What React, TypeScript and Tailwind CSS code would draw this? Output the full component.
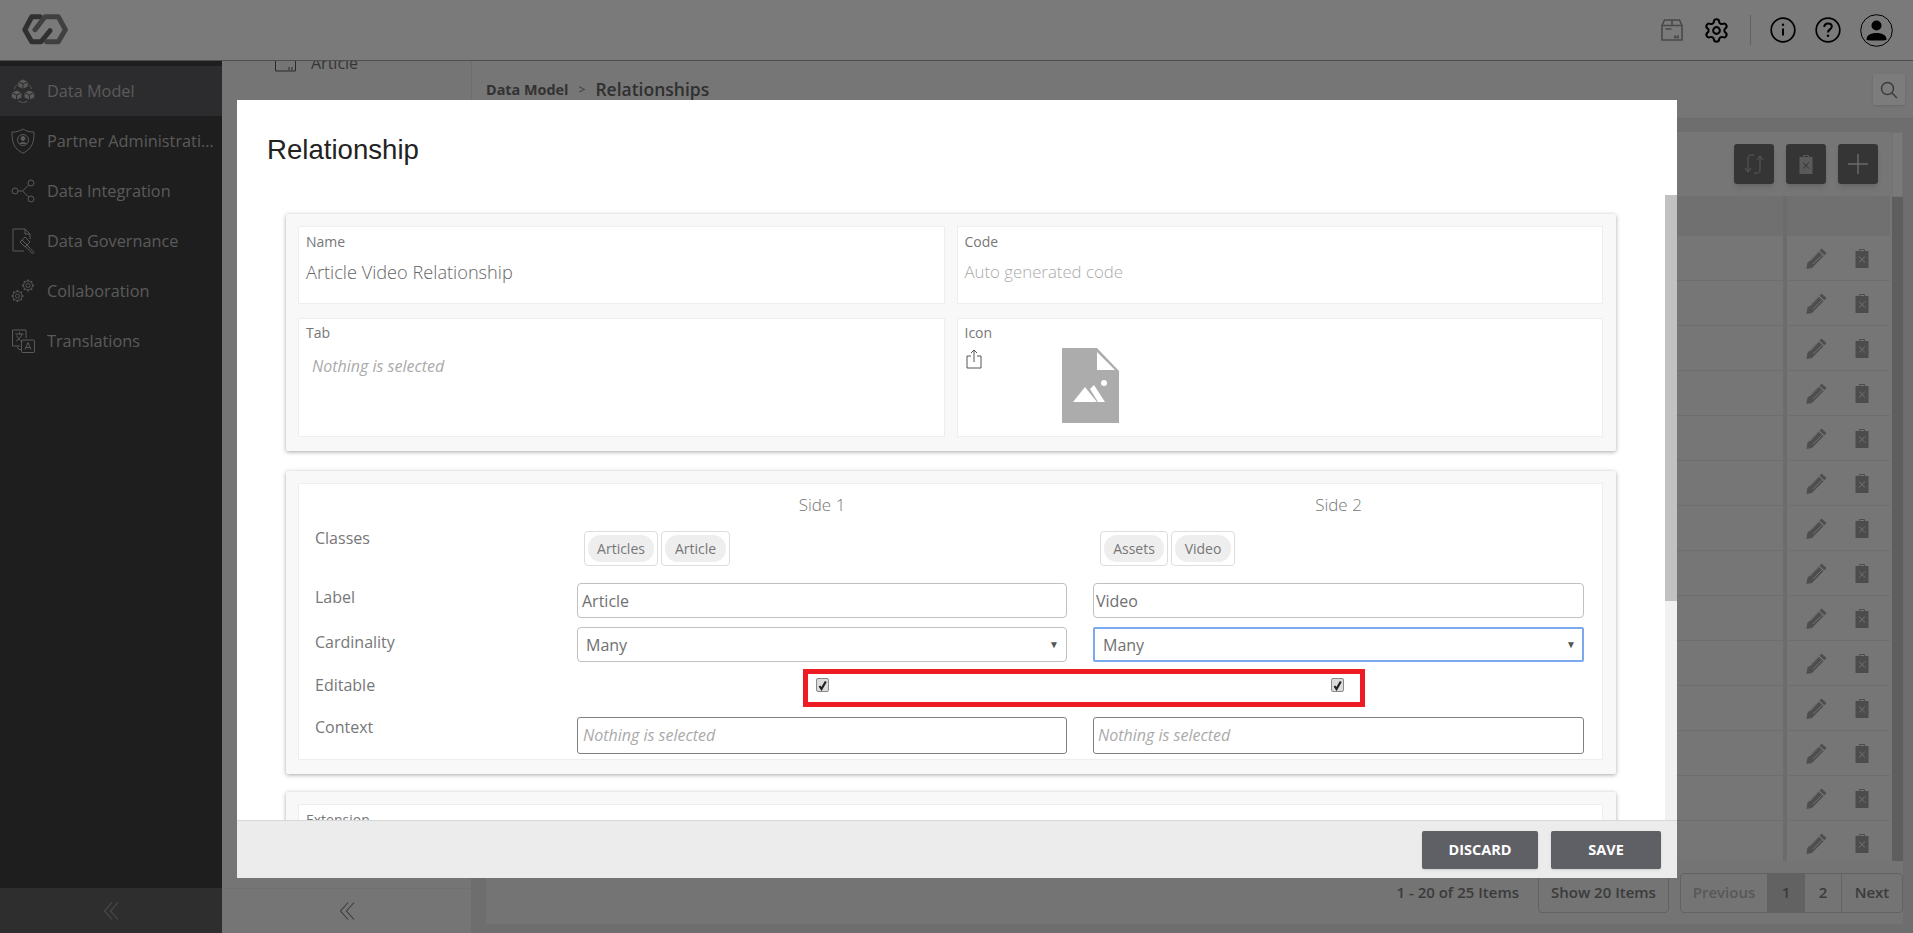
import { Settings } from "lucide-react";

const font = { fontFamily: '"Open Sans", "Noto Sans", sans-serif' };

function IconCubes() {
  return (
    <svg width="24" height="24" viewBox="0 0 24 24" fill="#b4b4b4" stroke="none">
      <path d="M12 0.500l4.800 2.200v4.800L12 9.800 7.200 7.500V2.700z" />
      <path d="M5.600 11.500l4.800 2.200v4.800l-4.800 2.300-4.800-2.300v-4.800z" />
      <path d="M18.400 11.500l4.800 2.200v4.800l-4.800 2.300-4.800-2.300v-4.800z" />
      <path d="M3.500 10C4 8 5 6.500 6.300 5.500M20.500 10c-.5-2-1.500-3.500-2.800-4.500M7.500 22l4.500 2 4.500-2" fill="none" stroke="#b4b4b4" strokeWidth="1" />
      <path d="M12 5v4.800M.8 13.700l4.800 2.300 4.800-2.300M13.600 13.700l4.800 2.300 4.800-2.300M5.600 16v5M18.400 16v5M7.200 2.700L12 5l4.800-2.300" fill="none" stroke="#3c3c3c" strokeWidth="0.800" />
    </svg>
  );
}
function IconShield() {
  return (
    <svg width="24" height="26" viewBox="0 0 24 26" fill="none" stroke="#b4b4b4" strokeWidth="1">
      <path d="M12 1c3 2 6.500 3 11 3.200 0 9-1 16-11 21C2 20.200 1 13.200 1 4.200 5.500 4 9 3 12 1z" />
      <circle cx="12" cy="12" r="5.500" />
      <circle cx="12" cy="10.500" r="2" fill="#b4b4b4" />
      <path d="M8.500 16c1-2 6-2 7 0" fill="#b4b4b4" />
    </svg>
  );
}
function IconNodes() {
  return (
    <svg width="24" height="24" viewBox="0 0 24 24" fill="none" stroke="#b4b4b4" strokeWidth="1">
      <circle cx="4" cy="12" r="3" />
      <circle cx="20" cy="4" r="3" />
      <circle cx="20" cy="20" r="3" />
      <path d="M7 12h4.500l6.300-6M11.500 12l6.300 6" />
    </svg>
  );
}
function IconGavel() {
  return (
    <svg width="24" height="26" viewBox="0 0 24 26" fill="none" stroke="#b4b4b4" strokeWidth="1">
      <path d="M13 23H2V1h12l5 5v5M14 1v5h5" />
      <path d="M9 14l5-5 5 5-5 5z" />
      <path d="M11 12l5 5M16 17l7 7.500-1.500 1.200-7-7" />
    </svg>
  );
}
function Gear({ x, y, r }: { x: number; y: number; r: number }) {
  const teeth = [0, 45, 90, 135, 180, 225, 270, 315];
  return (
    <g>
      <circle cx={x} cy={y} r={r} />
      <circle cx={x} cy={y} r={r * 0.45} />
      {teeth.map((a) => {
        const c = Math.cos((a * Math.PI) / 180);
        const s = Math.sin((a * Math.PI) / 180);
        return <line key={a} x1={x + c * r} y1={y + s * r} x2={x + c * (r + 1.500)} y2={y + s * (r + 1.500)} strokeWidth="1.500" />;
      })}
    </g>
  );
}
function IconGears() {
  return (
    <svg width="24" height="24" viewBox="0 0 24 24" fill="none" stroke="#b4b4b4" strokeWidth="0.900">
      <Gear x={17} y={6.500} r={4.500} />
      <Gear x={6.500} y={17} r={4.500} />
    </svg>
  );
}
function IconTranslate() {
  return (
    <svg width="24" height="24" viewBox="0 0 24 24" fill="none" stroke="#b4b4b4" strokeWidth="1">
      <path d="M9 17H1.500V1h13.500v8" />
      <rect x="10.500" y="11" width="13" height="12.500" rx="1" />
      <path d="M4.500 5h8M8.500 3v2M5 12c3-1.500 5-4 6-7M5.500 6.500c1.500 3 3.500 5 6 6" />
      <path d="M14 20.500l3-7 3 7M15 18.500h4" />
      <path d="M6 18l2 2.500h3" />
    </svg>
  );
}
function Logo() {
  return (
    <svg width="46" height="32" viewBox="0 0 46 32" fill="none" strokeWidth="5" strokeLinejoin="round" strokeLinecap="round">
      <path d="M18 2.800H9.700L2.800 15.700 9.700 27.800H19L28 16.700" stroke="#606060" />
      <path d="M13 15.700L23 2.800H36.300L43.400 15.700 36.300 27.800H24.700" stroke="#808080" />
    </svg>
  );
}
function IconBox() {
  return (
    <svg width="22" height="22" viewBox="0 0 22 22" fill="none" stroke="#909090" strokeWidth="1.600">
      <path d="M1 6.500L3.500 1h15L21 6.500V21H1z" />
      <path d="M1 6.500h20M11 1v5.500" />
      <path d="M4.500 10h6M14 16v2M17 16v2M13 18.500h5" strokeWidth="1.300" />
    </svg>
  );
}
function IconInfo() {
  return (
    <svg width="26" height="26" viewBox="0 0 26 26" fill="none" stroke="#000" strokeWidth="1.700">
      <circle cx="13" cy="13" r="11.800" />
      <path d="M13 11.500v7" strokeWidth="2" />
      <circle cx="13" cy="7.800" r="1.200" fill="#000" stroke="none" />
    </svg>
  );
}
function IconHelp() {
  return (
    <svg width="26" height="26" viewBox="0 0 26 26" fill="none" stroke="#000" strokeWidth="1.700">
      <circle cx="13" cy="13" r="11.800" />
      <path d="M9.300 10c0-2.300 1.700-3.600 3.800-3.600s3.700 1.300 3.700 3.200c0 2.800-3.800 2.700-3.800 5.800" strokeWidth="2" />
      <circle cx="13" cy="18.800" r="1.300" fill="#000" stroke="none" />
    </svg>
  );
}
function IconUser() {
  return (
    <svg width="33" height="33" viewBox="0 0 33 33">
      <circle cx="16.500" cy="16.500" r="15.800" fill="none" stroke="#000" strokeWidth="1" />
      <circle cx="16.500" cy="11.500" r="5" fill="#000" />
      <path d="M6.500 26c0-5 4-7 10-7s10 2 10 7c-3 .8-17 .8-20 0z" fill="#000" />
    </svg>
  );
}
function Pencil() {
  return (
    <svg width="21" height="21" viewBox="0 0 21 21" fill="#9c9c9c">
      <path d="M15.500 0.500l5 4.500-2 2.200-5-4.500z" />
      <path d="M12.600 3.500l5 4.500L6 20l-5.500 1 .8-6z" />
      <path d="M4 13l9-9.500M7 16l9.500-9.500" stroke="#ececec" strokeWidth="0.800" fill="none" />
    </svg>
  );
}
function Trash({ fill, cross }: { fill: string; cross: string }) {
  return (
    <svg width={14} height={19} viewBox="0 0 14 19">
      <path d="M4.500 2V.5h5V2" fill="none" stroke={fill} strokeWidth="1" />
      <rect x="0.500" y="2" width="13" height="17" fill={fill} />
      <path d="M4 7.500l6 6M10 7.500l-6 6" stroke={cross} strokeWidth="0.900" />
    </svg>
  );
}
function DoubleChevron({ color }: { color: string }) {
  return (
    <svg width="16" height="18" viewBox="0 0 16 18" fill="none" stroke={color} strokeWidth="1.100">
      <path d="M9 0.500L1.500 9 9 17.500M15 0.500L7.500 9 15 17.500" />
    </svg>
  );
}
function CheckBox() {
  return (
    <span className="flex h-[14px] w-[13px] items-center justify-center rounded-[2px] border border-[#8a8a8a] bg-[#dcdcdc]">
      <svg width="11" height="11" viewBox="0 0 11 11" fill="none" stroke="#222" strokeWidth="2.200">
        <path d="M2.500 6L4.500 9 8.800 1.500" />
      </svg>
    </span>
  );
}
function Chip({ text, width }: { text: string; width: number }) {
  return (
    <span className="flex h-[35px] items-center rounded-[4px] border border-[#dddddd] px-[3px]">
      <span style={{ width }} className="flex h-[27px] items-center justify-center rounded-[13px] bg-[#eeeeee] text-[14px] text-[#777777]">
        {text}
      </span>
    </span>
  );
}
function Field({ label, children, className }: { label: string; children?: React.ReactNode; className: string }) {
  return (
    <div className={`border border-[#eeeeee] bg-white pl-[7px] ${className}`}>
      <div className="text-[14px] leading-[18px] text-[#777777]">{label}</div>
      {children}
    </div>
  );
}

const nav: [string, React.ReactNode][] = [
  ["Data Model", <IconCubes />],
  ["Partner Administration", <IconShield />],
  ["Data Integration", <IconNodes />],
  ["Data Governance", <IconGavel />],
  ["Collaboration", <IconGears />],
  ["Translations", <IconTranslate />],
];
const rows = Array.from({ length: 14 }, (_, i) => i);

export default function App() {
  return (
    <div style={font} className="relative flex h-[933px] w-full flex-col overflow-hidden bg-[#eaeaea]">
      <header className="flex h-[61px] shrink-0 items-center border-b border-[#9a9a9a] bg-[#f4f4f4] pl-[22px] pr-[20px]">
        <Logo />
        <div className="ml-auto flex items-center">
          <IconBox />
          <Settings size={27} strokeWidth={1.800} color="#000" className="ml-[20px]" />
          <span className="ml-[20px] h-[30px] w-px bg-[#c4c4c4]" />
          <span className="ml-[19px]"><IconInfo /></span>
          <span className="ml-[19px]"><IconHelp /></span>
          <span className="ml-[19px]"><IconUser /></span>
        </div>
      </header>

      <div className="flex min-h-0 flex-1">
        <aside className="flex w-[222px] shrink-0 flex-col bg-[#3c3c3c] pt-[5px]">
          {nav.map(([name, icon], i) => (
            <div key={name} className={`flex h-[50px] shrink-0 items-center pl-[11px] ${i === 0 ? "bg-[#58585c]" : ""}`}>
              <span className="flex w-[24px] justify-center">{icon}</span>
              <span className="ml-[12px] w-[167px] truncate text-[16.3px] text-[#b4b4b4]">{name}</span>
            </div>
          ))}
          <div className="mt-auto flex h-[45px] items-center justify-center bg-[#5c5c5c]">
            <DoubleChevron color="#9a9a9a" />
          </div>
        </aside>

        <div className="flex w-[250px] shrink-0 flex-col overflow-hidden border-r border-[#dcdcdc]">
          <div className="flex h-[16px] items-end pl-[53px]">
            <svg width="21" height="17" viewBox="0 0 21 17" fill="none" stroke="#555" strokeWidth="1" className="shrink-0">
              <path d="M0.500 0v11h20V0M14 7v3M17 7v3" />
            </svg>
            <span className="mb-[4px] ml-[15px] text-[16px] leading-[20px] text-[#6a6a6a]">Article</span>
          </div>
          <div className="mt-auto flex h-[45px] items-center justify-center border-t border-[#e0e0e0]">
            <DoubleChevron color="#777777" />
          </div>
        </div>

        <main className="flex min-w-0 flex-1 flex-col bg-[#dcdcdc]">
          <div className="flex h-[58px] shrink-0 items-center border-b border-[#d4d4d4] bg-[#ececec] pl-[14px] pr-[8px]">
            <span className="text-[14.4px] font-bold text-[#666666]">Data Model</span>
            <span className="ml-[10px] text-[12px] text-[#777777]">&gt;</span>
            <span className="ml-[10px] text-[17.5px] font-semibold text-[#606060]">Relationships</span>
            <span className="ml-auto flex h-[31px] w-[32px] items-center justify-center rounded-[2px] bg-[#f8f8f8] shadow">
              <svg width="18" height="18" viewBox="0 0 18 18" fill="none" stroke="#777" strokeWidth="1.500">
                <circle cx="7.500" cy="7.500" r="6" />
                <path d="M12 12l5 5" />
              </svg>
            </span>
          </div>

          <div className="flex min-h-0 flex-1 flex-col pb-[9px] pl-[14px] pr-[10px] pt-[13px]">
            <div className="flex min-h-0 flex-1 flex-col bg-[#ececec]">
              <div className="flex min-h-0 flex-1">
                <div className="flex min-w-0 flex-1 flex-col overflow-hidden">
                  <div className="flex h-[64px] shrink-0 items-start justify-end gap-[12px] pr-[12px] pt-[12px]">
                    <span className="flex h-[40px] w-[40px] items-center justify-center rounded-[3px] bg-[#6a6a6a] shadow-md">
                      <svg width="20" height="22" viewBox="0 0 20 22" fill="none" stroke="#b4b4b4" strokeWidth="1">
                        <path d="M1 15l3 4 3-4M4 19V5c0-2 1-3 3-3h3M19 7l-3-4-3 4M16 3v14c0 2-1 3-3 3h-3" />
                      </svg>
                    </span>
                    <span className="flex h-[40px] w-[40px] items-center justify-center rounded-[3px] bg-[#6a6a6a] shadow-md">
                      <Trash fill="#b4b4b4" cross="#555" />
                    </span>
                    <span className="flex h-[40px] w-[40px] items-center justify-center rounded-[3px] bg-[#6a6a6a] shadow-md">
                      <svg width="20" height="20" viewBox="0 0 20 20" stroke="#d4d4d4" strokeWidth="1.500">
                        <path d="M10 0v20M0 10h20" />
                      </svg>
                    </span>
                  </div>
                  <div className="flex h-[40px] shrink-0 bg-[#e0e0e0]">
                    <div className="flex-1" />
                    <div className="w-[4px] bg-[#d8d8d8]" />
                    <div className="w-[103px]" />
                  </div>
                  {rows.map((r) => (
                    <div key={r} className="flex h-[45px] shrink-0 border-b border-[#dcdcdc]">
                      <div className="flex-1" />
                      <div className="w-[4px] bg-[#d8d8d8]" />
                      <div className="flex w-[103px] items-center justify-between pl-[19px] pr-[21px]">
                        <Pencil />
                        <Trash fill="#989898" cross="#ececec" />
                      </div>
                    </div>
                  ))}
                </div>
                <div className="ml-[2px] flex w-[11px] shrink-0 flex-col bg-[#bcbcbc]">
                  <div className="h-[65px] border border-[#e4e4e4] bg-[#f4f4f4]" />
                </div>
              </div>
              <div className="flex h-[63px] shrink-0 items-center justify-end bg-[#e8e8e8] text-[15px] font-semibold text-[#777777]">
                <span className="mr-[19px]">1 - 20 of 25 Items</span>
                <span className="flex h-[40px] w-[131px] items-center justify-center rounded-[4px] border border-[#c4c4c4]">Show 20 Items</span>
                <div className="ml-[11px] flex h-[40px] w-[223px] overflow-hidden rounded-[4px] border border-[#c4c4c4]">
                  <span className="flex w-[86px] items-center justify-center text-[#b0b0b0]">Previous</span>
                  <span className="flex w-[38px] items-center justify-center bg-[#c4c4c4]">1</span>
                  <span className="flex w-[37px] items-center justify-center border-r border-[#c4c4c4]">2</span>
                  <span className="flex flex-1 items-center justify-center">Next</span>
                </div>
              </div>
            </div>
          </div>
        </main>
      </div>

      {/* Dimming layer and modal dialog */}
      <div className="absolute inset-0 bg-black/50" />
      <div className="absolute left-[237px] top-[100px] flex h-[778px] w-[1440px] flex-col bg-white">
        <div className="flex h-[95px] shrink-0 items-start pl-[30px] pt-[32px]">
          <h2 style={{ fontFamily: '"Liberation Sans", Arial, sans-serif' }} className="text-[27.6px] leading-[36px] text-[#222222]">
            Relationship
          </h2>
        </div>

        <div className="flex min-h-0 flex-1">
          <div className="min-w-0 flex-1 overflow-hidden pl-[49px] pr-[49px] pt-[19px]">
            <section className="rounded-[2px] bg-[#f8f8f8] pb-[14px] pl-[12px] pr-[13px] pt-[12px] shadow-[0_1px_4px_rgba(0,0,0,0.35)]">
              <div className="grid grid-cols-2 gap-x-[12px] gap-y-[14px]">
                <Field label="Name" className="h-[78px] pt-[6px]">
                  <div className="mt-[9px] text-[18.2px] font-light leading-[24px] text-[#666666]">Article Video Relationship</div>
                </Field>
                <Field label="Code" className="h-[78px] pt-[6px]">
                  <div className="mt-[9px] text-[16.8px] font-light leading-[24px] text-[#aaaaaa]">Auto generated code</div>
                </Field>
                <Field label="Tab" className="h-[119px] pt-[5px]">
                  <div className="ml-[6px] mt-[12px] text-[16px] italic leading-[24px] text-[#aaaaaa]">Nothing is selected</div>
                </Field>
                <Field label="Icon" className="h-[119px] pt-[5px]">
                  <div className="mt-[7px] flex items-start">
                    <svg width="16" height="20" viewBox="0 0 16 20" fill="none" stroke="#555" strokeWidth="1" className="ml-[1px]">
                      <path d="M5 7H1v12h14V7h-4M8 13V1M5 4l3-3 3 3" />
                    </svg>
                    <svg width="57" height="75" viewBox="0 0 57 75" className="ml-[80px] mt-[-1px]">
                      <path d="M0 0h35l22 23v52H0z" fill="#acacac" />
                      <path d="M35 4v18h18z" fill="#fff" />
                      <circle cx="42" cy="35" r="3" fill="#fff" />
                      <path d="M11 54l12-15 12 15zM28 41l4-4 11 17h-7z" fill="#fff" />
                    </svg>
                  </div>
                </Field>
              </div>
            </section>

            <section className="mt-[20px] rounded-[2px] bg-[#f8f8f8] pb-[14px] pl-[12px] pr-[13px] pt-[12px] shadow-[0_1px_4px_rgba(0,0,0,0.35)]">
              <div className="relative h-[277px] border border-[#eeeeee] bg-white pl-[16px] text-[16px] text-[#777777]">
                <div className="grid grid-cols-[236px_490px_491px] gap-x-[26px]">
                  <span />
                  <div className="flex h-[42px] items-center justify-center text-[17px] font-light">Side 1</div>
                  <div className="flex h-[42px] items-center justify-center text-[17px] font-light">Side 2</div>

                  <span className="mt-[2px] leading-[20px]">Classes</span>
                  <div className="mt-[5px] flex gap-[3px] pl-[7px]">
                    <Chip text="Articles" width={66} />
                    <Chip text="Article" width={61} />
                  </div>
                  <div className="mt-[5px] flex gap-[3px] pl-[7px]">
                    <Chip text="Assets" width={60} />
                    <Chip text="Video" width={56} />
                  </div>

                  <span className="mt-[21px] leading-[20px]">Label</span>
                  <div className="mt-[17px] flex h-[35px] items-center rounded-[4px] border border-[#c0c0c0] pl-[4px] text-[#707070]">Article</div>
                  <div className="mt-[17px] flex h-[35px] items-center rounded-[4px] border border-[#c0c0c0] pl-[2px] text-[#707070]">Video</div>

                  <span className="mt-[14px] leading-[20px]">Cardinality</span>
                  <div className="mt-[9px] flex h-[35px] items-center justify-between rounded-[4px] border border-[#c0c0c0] pl-[8px] pr-[7px] text-[#707070]">
                    Many<span className="text-[10px] text-[#555555]">▼</span>
                  </div>
                  <div className="mt-[9px] flex h-[35px] items-center justify-between rounded-[2px] border-2 border-[#7aa9ee] pl-[8px] pr-[6px] text-[#707070]">
                    Many<span className="text-[10px] text-[#555555]">▼</span>
                  </div>

                  <span className="mt-[13px] leading-[20px]">Editable</span>
                  <div className="mt-[7px] flex h-[32px] items-center justify-center"><CheckBox /></div>
                  <div className="mt-[7px] flex h-[32px] items-center justify-center pr-[2px]"><CheckBox /></div>

                  <span className="mt-[16px] leading-[20px]">Context</span>
                  <div className="mt-[16px] flex h-[37px] items-center rounded-[3px] border border-[#808080] pb-[1px] pl-[5px] italic text-[#aaaaaa]">Nothing is selected</div>
                  <div className="mt-[16px] flex h-[37px] items-center rounded-[3px] border border-[#808080] pb-[1px] pl-[4px] italic text-[#aaaaaa]">Nothing is selected</div>
                </div>
                <div className="absolute left-[504px] top-[185px] h-[38px] w-[562px] border-[5px] border-[#ed1c24]" />
              </div>
            </section>

            <section className="mt-[18px] rounded-[2px] bg-[#f8f8f8] pl-[12px] pr-[13px] pt-[12px] shadow-[0_1px_4px_rgba(0,0,0,0.35)]">
              <Field label="Extension" className="h-[80px] pt-[6px]" />
            </section>
          </div>
          <div className="flex w-[12px] shrink-0 flex-col bg-[#f1f1f1]">
            <div className="h-[406px] bg-[#c1c1c1]" />
          </div>
        </div>

        <footer className="flex h-[58px] shrink-0 items-center justify-end gap-[13px] border-t border-[#d8d8d8] bg-[#ececec] pr-[16px]">
          <button className="h-[38px] w-[116px] rounded-[2px] bg-[#5f6066] text-[14.5px] font-bold text-white shadow">DISCARD</button>
          <button className="h-[38px] w-[110px] rounded-[2px] bg-[#5f6066] text-[14.5px] font-bold text-white shadow">SAVE</button>
        </footer>
      </div>
    </div>
  );
}
